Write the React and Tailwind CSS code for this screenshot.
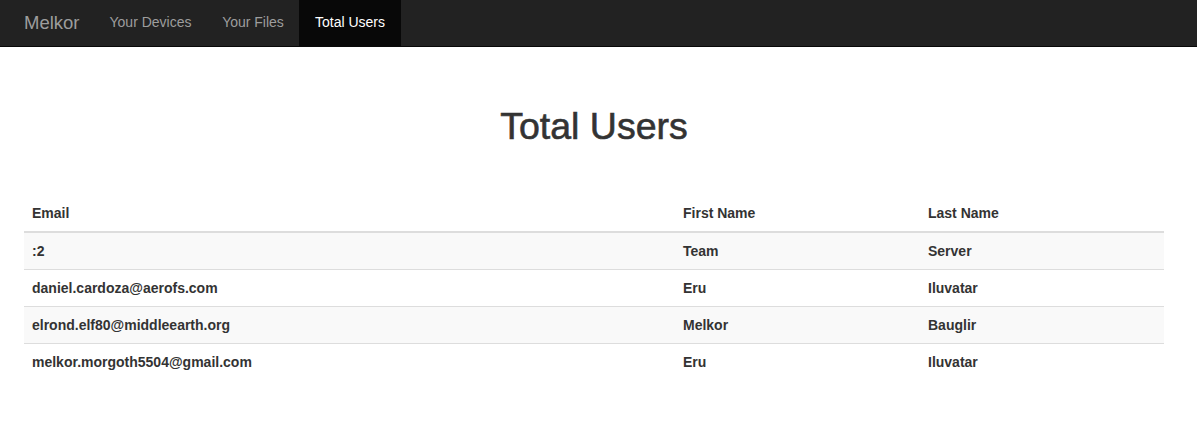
import React from 'react';

const users = [
  { email: ':2', first: 'Team', last: 'Server' },
  { email: 'daniel.cardoza@aerofs.com', first: 'Eru', last: 'Iluvatar' },
  { email: 'elrond.elf80@middleearth.org', first: 'Melkor', last: 'Bauglir' },
  { email: 'melkor.morgoth5504@gmail.com', first: 'Eru', last: 'Iluvatar' },
];

export default function App() {
  return (
    <div className="min-h-screen bg-white text-[#333] font-['Liberation_Sans',Arial,sans-serif] text-[14px]">
      {/* Navbar */}
      <nav className="h-[47px] bg-[#222] border-b border-[#080808] flex items-stretch pl-[9px]">
        <a href="#" className="w-[85px] pl-[15px] pb-[1px] flex items-center text-[18.5px] text-[#9d9d9d]">Melkor</a>
        <a href="#" className="w-[113px] pb-[2px] flex items-center justify-center text-[#9d9d9d]">Your Devices</a>
        <a href="#" className="w-[92px] pb-[2px] flex items-center justify-center text-[#9d9d9d]">Your Files</a>
        <a href="#" className="w-[102px] pb-[2px] flex items-center justify-center bg-[#080808] text-white">Total Users</a>
      </nav>

      {/* Content */}
      <main className="pl-[24px] pr-[33px]">
        <h1 className="text-center text-[37.5px] font-normal leading-[1.1] mt-[59px] mb-[48px] [-webkit-text-stroke:0.6px_#333]">Total Users</h1>

        <table className="w-full border-collapse font-bold">
          <thead>
            <tr>
              <th className="text-left p-[8px] leading-[20px] border-b-2 border-[#ddd] w-[651px]">Email</th>
              <th className="text-left p-[8px] leading-[20px] border-b-2 border-[#ddd] w-[245px]">First Name</th>
              <th className="text-left p-[8px] leading-[20px] border-b-2 border-[#ddd]">Last Name</th>
            </tr>
          </thead>
          <tbody>
            {users.map((u, i) => (
              <tr key={i} className={i % 2 === 0 ? 'bg-[#f9f9f9]' : ''}>
                <td className={`p-[8px] leading-[20px] ${i > 0 ? 'border-t border-[#ddd]' : ''}`}>{u.email}</td>
                <td className={`p-[8px] leading-[20px] ${i > 0 ? 'border-t border-[#ddd]' : ''}`}>{u.first}</td>
                <td className={`p-[8px] leading-[20px] ${i > 0 ? 'border-t border-[#ddd]' : ''}`}>{u.last}</td>
              </tr>
            ))}
          </tbody>
        </table>
      </main>
    </div>
  );
}
